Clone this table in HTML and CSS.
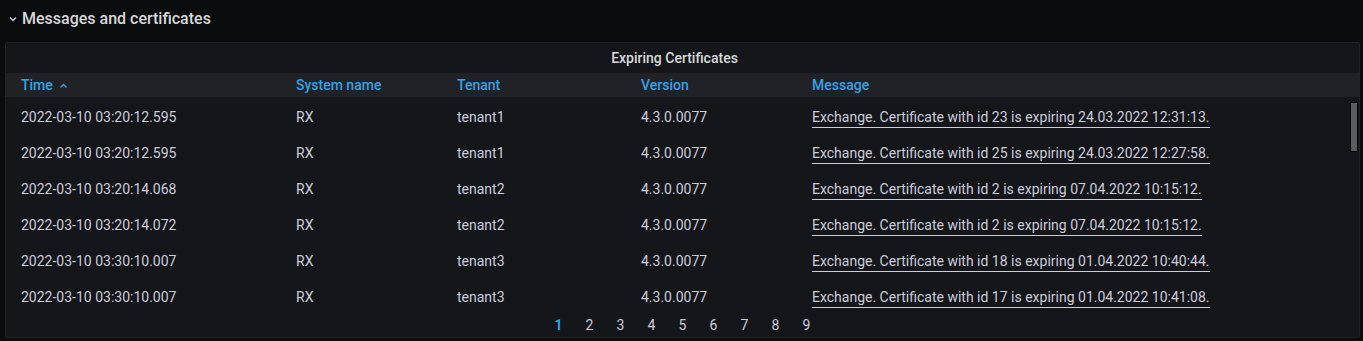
FILE: index.html
```html
<!DOCTYPE html>
<html lang="en">
<head>
<meta charset="UTF-8">
<title>Messages and certificates</title>
<link rel="stylesheet" href="styles.css">
</head>
<body>
<div class="row-header">
  <svg class="chevron" width="8" height="6" viewBox="0 0 8 6"><path d="M1 1.5 L4 4.5 L7 1.5" fill="none" stroke="#ccccdc" stroke-width="1.4"/></svg>
  <span>Messages and certificates</span>
</div>
<div class="panel">
  <div class="panel-title">Expiring Certificates</div>
  <div class="table">
    <div class="thead">
      <div>Time <svg class="sort" width="9" height="6" viewBox="0 0 9 6"><path d="M1.5 4.5 L4.5 1.5 L7.5 4.5" fill="none" stroke="#33a2e5" stroke-width="1.4"/></svg></div>
      <div>System name</div>
      <div>Tenant</div>
      <div>Version</div>
      <div>Message</div>
    </div>
    <div class="tbody">
      <div class="tr"><div>2022-03-10 03:20:12.595</div><div>RX</div><div>tenant1</div><div>4.3.0.0077</div><div><a class="msg">Exchange. Certificate with id 23 is expiring 24.03.2022 12:31:13.</a></div></div>
      <div class="tr"><div>2022-03-10 03:20:12.595</div><div>RX</div><div>tenant1</div><div>4.3.0.0077</div><div><a class="msg">Exchange. Certificate with id 25 is expiring 24.03.2022 12:27:58.</a></div></div>
      <div class="tr"><div>2022-03-10 03:20:14.068</div><div>RX</div><div>tenant2</div><div>4.3.0.0077</div><div><a class="msg">Exchange. Certificate with id 2 is expiring 07.04.2022 10:15:12.</a></div></div>
      <div class="tr"><div>2022-03-10 03:20:14.072</div><div>RX</div><div>tenant2</div><div>4.3.0.0077</div><div><a class="msg">Exchange. Certificate with id 2 is expiring 07.04.2022 10:15:12.</a></div></div>
      <div class="tr"><div>2022-03-10 03:30:10.007</div><div>RX</div><div>tenant3</div><div>4.3.0.0077</div><div><a class="msg">Exchange. Certificate with id 18 is expiring 01.04.2022 10:40:44.</a></div></div>
      <div class="tr"><div>2022-03-10 03:30:10.007</div><div>RX</div><div>tenant3</div><div>4.3.0.0077</div><div><a class="msg">Exchange. Certificate with id 17 is expiring 01.04.2022 10:41:08.</a></div></div>
      <div class="scroll-thumb"></div>
    </div>
  </div>
  <div class="pager">
    <span class="active">1</span><span>2</span><span>3</span><span>4</span><span>5</span><span>6</span><span>7</span><span>8</span><span>9</span>
  </div>
</div>
</body>
</html>
```
FILE: styles.css
```css
body{margin:0;padding:0 3px 0 5px;background:#0b0c0e;color:#ccccdc;font-family:Roboto,"Liberation Sans",sans-serif;font-size:14px;}
.row-header{height:36px;display:flex;align-items:center;gap:5px;padding-left:4px;font-size:16px;font-weight:500;color:#d8d9da;}
.chevron{margin-top:1px;}
.panel{margin-top:6px;height:294px;background:#141619;border:1px solid #202226;border-radius:2px;display:flex;flex-direction:column;}
.panel-title{height:30px;display:flex;align-items:center;justify-content:center;padding-right:16px;font-weight:500;color:#d8d9da;}
.thead,.tr{display:grid;grid-template-columns:275px 161px 184px 171px 1fr;padding-left:15px;align-items:center;}
.thead{height:24px;background:#202226;color:#33a2e5;font-weight:500;}
.sort{margin-left:3px;vertical-align:1px;}
.tbody{position:relative;padding-top:2px;}
.tr{height:36px;}
.msg{color:#ccccdc;border-bottom:1px solid #ccccdc;padding-bottom:2px;}
.scroll-thumb{position:absolute;right:1px;top:5px;width:6px;height:48px;background:#5b5d63;border:1px solid #000;border-radius:1px;}
.pager{display:flex;justify-content:center;padding-top:2px;}
.pager span{width:31px;text-align:center;}
.pager .active{color:#33a2e5;font-weight:700;}
```
